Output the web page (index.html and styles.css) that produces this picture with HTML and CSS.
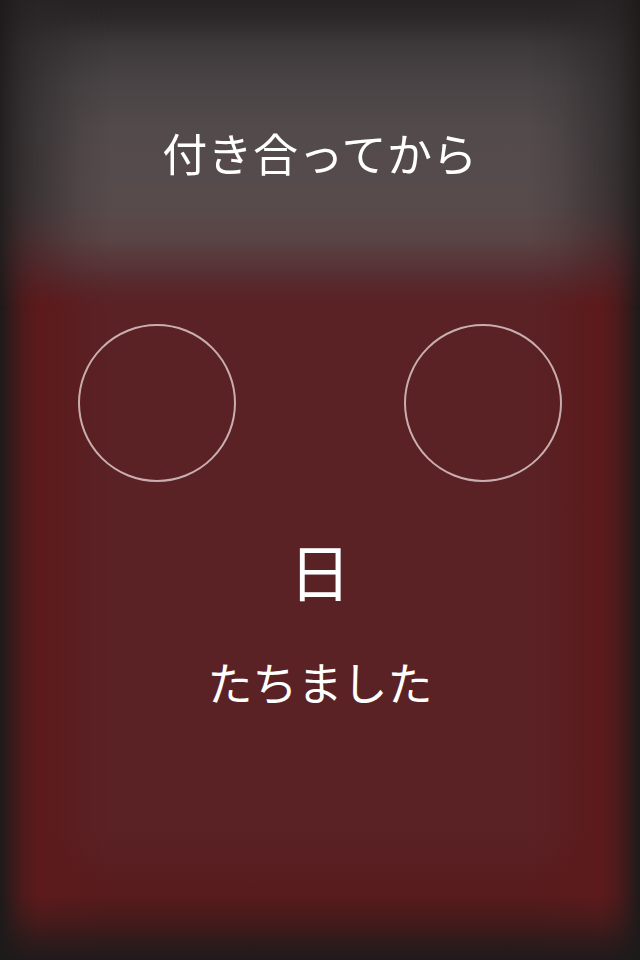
FILE: index.html
```html
<!DOCTYPE html>
<html lang="ja">
<head>
<meta charset="utf-8">
<title>付き合ってから</title>
<link rel="stylesheet" href="styles.css">
</head>
<body>
<main class="screen">
  <header class="header">
    <h1 class="title">付き合ってから</h1>
  </header>
  <section class="photos">
    <div class="photo"></div>
    <div class="photo"></div>
  </section>
  <div class="days">日</div>
  <p class="passed">たちました</p>
</main>
</body>
</html>
```
FILE: styles.css
```css
html, body {
  margin: 0;
  padding: 0;
  background: #1e1a1a;
}

.screen {
  width: 640px;
  height: 960px;
  overflow: hidden;
  display: flex;
  flex-direction: column;
  align-items: center;
  font-family: "Noto Sans CJK JP", "Noto Sans", sans-serif;
  color: #ffffff;
  background-color: #5a2225;
  background-image:
    /* dark side vignette */
    linear-gradient(to right, rgba(29, 26, 26, 1) 0, rgba(29, 26, 26, 0.65) 10px, rgba(29, 26, 26, 0.25) 22px, rgba(29, 26, 26, 0) 38px, rgba(29, 26, 26, 0) 602px, rgba(29, 26, 26, 0.25) 618px, rgba(29, 26, 26, 0.65) 630px, rgba(29, 26, 26, 1) 640px),
    /* dark bottom vignette */
    linear-gradient(to top, rgba(33, 26, 27, 1) 0, rgba(33, 26, 27, 0.75) 18px, rgba(33, 26, 27, 0.35) 38px, rgba(33, 26, 27, 0) 64px),
    /* dark top area behind the header glow */
    linear-gradient(to bottom, #2a2628 0, #2a2628 200px, rgba(50, 36, 38, 0.6) 250px, rgba(60, 34, 36, 0) 300px),
    /* saturated red band near the edges */
    linear-gradient(to right, #5c1a1c 0, #5c1a1c 44px, rgba(92, 26, 28, 0) 110px, rgba(92, 26, 28, 0) 530px, #5c1a1c 596px, #5c1a1c 640px),
    linear-gradient(to top, #581a1c 0, #581a1c 60px, rgba(88, 26, 28, 0) 130px);
}

.header {
  width: 100%;
  height: 310px;
  flex: none;
  display: flex;
  justify-content: center;
  background-image:
    linear-gradient(to bottom, #252223 0, #2d292a 20px, #3d3839 45px, #4a4446 85px, #524a4b 130px, #564b4c 180px, #584a4b 210px, #5a4445 240px, rgba(90, 52, 56, 0.9) 268px, rgba(90, 40, 44, 0.5) 292px, rgba(90, 34, 37, 0) 310px),
    radial-gradient(ellipse 90px 70px at 70px 90px, rgba(90, 84, 100, 0.35), rgba(90, 84, 100, 0)),
    radial-gradient(ellipse 90px 70px at 570px 90px, rgba(90, 84, 100, 0.35), rgba(90, 84, 100, 0));
  -webkit-mask-image: linear-gradient(to right, rgba(0, 0, 0, 0.1) 0, rgba(0, 0, 0, 0.45) 40px, rgba(0, 0, 0, 0.85) 80px, #000 110px, #000 530px, rgba(0, 0, 0, 0.85) 560px, rgba(0, 0, 0, 0.45) 600px, rgba(0, 0, 0, 0.1) 640px);
  mask-image: linear-gradient(to right, rgba(0, 0, 0, 0.1) 0, rgba(0, 0, 0, 0.45) 40px, rgba(0, 0, 0, 0.85) 80px, #000 110px, #000 530px, rgba(0, 0, 0, 0.85) 560px, rgba(0, 0, 0, 0.45) 600px, rgba(0, 0, 0, 0.1) 640px);
}

.title {
  margin: 0;
  padding-top: 130px;
  font-size: 45px;
  line-height: 45px;
  font-weight: 400;
  letter-spacing: 0.4px;
}

.photos {
  margin-top: 14px;
  display: flex;
  justify-content: center;
  gap: 168px;
}

.photo {
  width: 158px;
  height: 158px;
  box-sizing: border-box;
  border: 2px solid rgba(232, 214, 214, 0.78);
  border-radius: 50%;
}

.days {
  margin-top: 57px;
  font-size: 62px;
  line-height: 62px;
}

.passed {
  margin: 58px 0 0;
  font-size: 45px;
  line-height: 45px;
}
```
